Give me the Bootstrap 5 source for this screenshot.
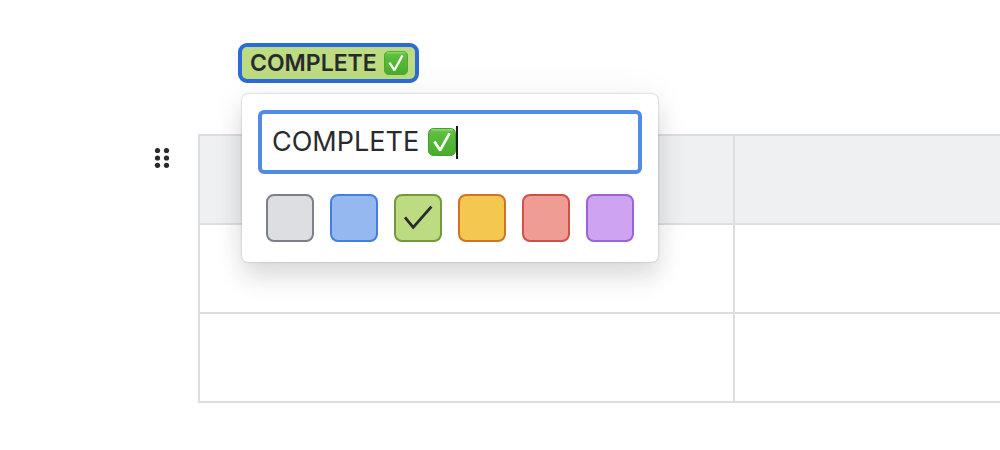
<!DOCTYPE html>
<html lang="en">
<head>
<meta charset="utf-8">
<meta name="viewport" content="width=device-width, initial-scale=1">
<title>Status editor</title>
<link href="https://cdn.jsdelivr.net/npm/bootstrap@5.3.0/dist/css/bootstrap.min.css" rel="stylesheet">
<script src="https://cdn.jsdelivr.net/npm/bootstrap@5.3.0/dist/js/bootstrap.bundle.min.js" defer></script>
<style>
  body { font-family: Inter, "Liberation Sans", sans-serif; color: #292a2e; background: #fff; }
  .editor { padding: 43px 0 48px 198px; }
  .status-wrap { margin-left: 40px; width: fit-content; }
  .lozenge { height: 40px; padding: 0 7px 0 8px; border: 4px solid #2c6bd6; border-radius: 9px; background: #bddb80; color: #292a2e; font-size: 23px; line-height: 32px; font-weight: 600; gap: 7px; }
  .popup { top: 51px; left: 4px; width: 416px; padding: 16px; border-radius: 6px; z-index: 5; box-shadow: 0 0 2px rgba(30,31,33,.32), 0 16px 24px rgba(30,31,33,.13), 0 0 36px rgba(30,31,33,.06); }
  .field { height: 64px; border: 4px solid #528be5; border-radius: 6px; padding: 0 10px; }
  .field input { width: 156px; font-size: 27px; line-height: 40px; color: #292a2e; outline: 0; }
  .caret { width: 2px; height: 33px; background: #1b1c1e; }
  .swatches { gap: 16px; padding: 20px 8px 4px; }
  .swatch { width: 48px; height: 48px; border: 2px solid; border-radius: 8px; cursor: pointer; }
  .gray { background: #dddee1; border-color: #7d7f8a; }
  .blue { background: #96b8f1; border-color: #437fe0; }
  .green { background: #bddb80; border-color: #73993a; }
  .yellow { background: #f4c84f; border-color: #d07328; }
  .red { background: #ef9c94; border-color: #d05045; }
  .purple { background: #cea4f1; border-color: #9f61d8; }
  .tick { visibility: hidden; }
  .btn-check:checked + .swatch .tick { visibility: visible; }
  .grid-row { margin: 51px 0 0 -48px; }
  .handle { width: 24px; height: 24px; margin: 12px 24px 0 0; color: #292a2e; }
  .grid { table-layout: fixed; width: calc(100% + 8px); border-collapse: collapse; }
  .grid th, .grid td { height: 89px; border: 2px solid #dddee1; }
  .grid th { background: #eff0f2; }
  .first-col { width: 535px; }
</style>
</head>
<body>
<main class="editor overflow-hidden">
  <div class="status-wrap position-relative">
    <button type="button" class="lozenge d-flex align-items-center" aria-expanded="true">
      <span>COMPLETE</span>
      <svg width="24" height="24" viewBox="0 0 28 28" role="img" aria-label="check mark"><defs><linearGradient id="greenSmall" x1="0" y1="0" x2="0" y2="1"><stop offset="0" stop-color="#6cc44c"/><stop offset=".25" stop-color="#58bd3a"/><stop offset="1" stop-color="#4aac2c"/></linearGradient></defs><rect x=".5" y=".5" width="27" height="27" rx="5" fill="url(#greenSmall)" stroke="#459f2d"/><path d="M4 1.8H24" stroke="#8dd970" stroke-width="1.5" stroke-linecap="round"/><path d="M5.2 14.2 7.6 12.8 12 19.7 20.3 4.8 22.8 5.8 13.2 23.1 11.2 23.2Z" fill="#fff"/></svg>
    </button>
    <div class="popup position-absolute bg-white">
      <div class="field d-flex align-items-center bg-white">
        <input type="text" value="COMPLETE" aria-label="Status text" class="border-0 p-0 bg-transparent" autocomplete="off">
        <svg width="28" height="28" viewBox="0 0 28 28" role="img" aria-label="check mark"><defs><linearGradient id="greenLarge" x1="0" y1="0" x2="0" y2="1"><stop offset="0" stop-color="#6cc44c"/><stop offset=".25" stop-color="#58bd3a"/><stop offset="1" stop-color="#4aac2c"/></linearGradient></defs><rect x=".5" y=".5" width="27" height="27" rx="5" fill="url(#greenLarge)" stroke="#459f2d"/><path d="M4 1.8H24" stroke="#8dd970" stroke-width="1.5" stroke-linecap="round"/><path d="M5.2 14.2 7.6 12.8 12 19.7 20.3 4.8 22.8 5.8 13.2 23.1 11.2 23.2Z" fill="#fff"/></svg>
        <span class="caret"></span>
      </div>
      <div class="swatches d-flex" role="radiogroup" aria-label="Color">
        <input class="btn-check" type="radio" name="color" id="cGray"><label class="swatch gray" for="cGray" aria-label="Gray"></label>
        <input class="btn-check" type="radio" name="color" id="cBlue"><label class="swatch blue" for="cBlue" aria-label="Blue"></label>
        <input class="btn-check" type="radio" name="color" id="cGreen" checked><label class="swatch green d-flex" for="cGreen" aria-label="Green"><svg class="tick" width="44" height="44" viewBox="0 0 44 44" fill="none" stroke="#292a2e" stroke-width="2.8"><path d="M9 21.3 17.2 31.4 35.4 10.6"/></svg></label>
        <input class="btn-check" type="radio" name="color" id="cYellow"><label class="swatch yellow" for="cYellow" aria-label="Yellow"></label>
        <input class="btn-check" type="radio" name="color" id="cRed"><label class="swatch red" for="cRed" aria-label="Red"></label>
        <input class="btn-check" type="radio" name="color" id="cPurple"><label class="swatch purple" for="cPurple" aria-label="Purple"></label>
      </div>
    </div>
  </div>
  <div class="grid-row d-flex align-items-start">
    <button type="button" class="handle border-0 p-0 bg-transparent flex-shrink-0 d-flex" aria-label="Drag row">
      <svg width="24" height="24" viewBox="0 0 24 24" fill="currentColor"><circle cx="7.5" cy="4.5" r="2.6"/><circle cx="16.5" cy="4.5" r="2.6"/><circle cx="7.5" cy="12" r="2.6"/><circle cx="16.5" cy="12" r="2.6"/><circle cx="7.5" cy="19.3" r="2.6"/><circle cx="16.5" cy="19.3" r="2.6"/></svg>
    </button>
    <div class="flex-grow-1">
      <table class="grid">
        <colgroup><col class="first-col"><col></colgroup>
        <thead><tr><th scope="col"></th><th scope="col"></th></tr></thead>
        <tbody><tr><td></td><td></td></tr><tr><td></td><td></td></tr></tbody>
      </table>
    </div>
  </div>
</main>
</body>
</html>
